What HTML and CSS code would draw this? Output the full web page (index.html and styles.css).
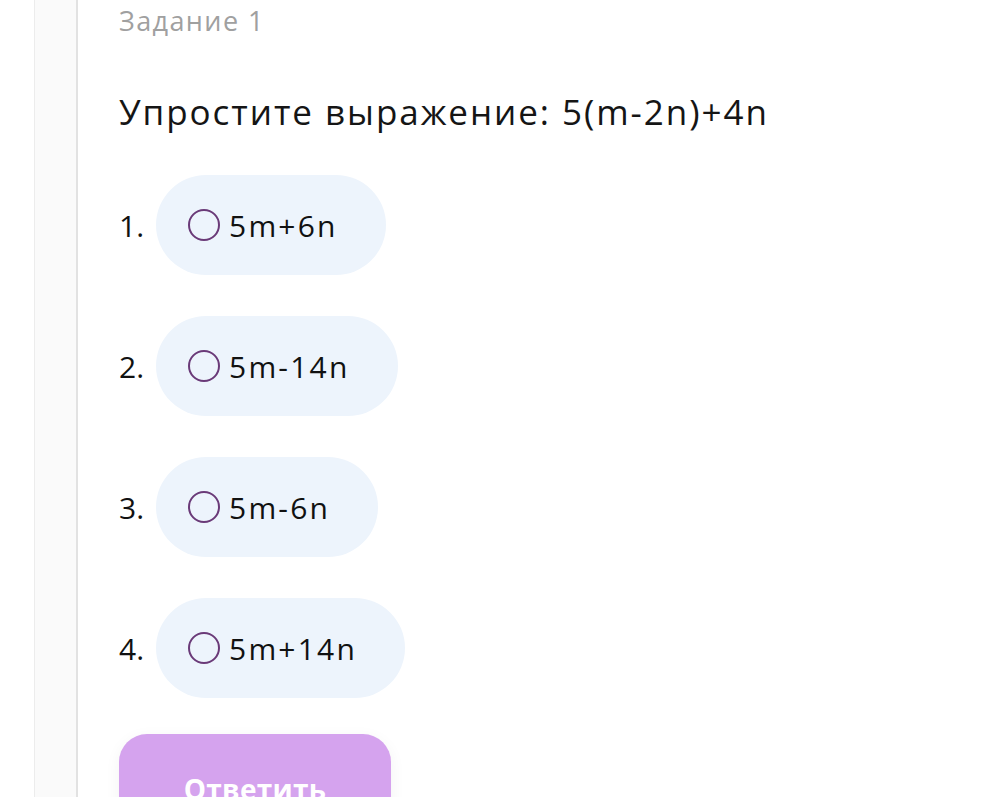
FILE: index.html
```html
<!DOCTYPE html>
<html lang="ru">
<head>
<meta charset="utf-8">
<link rel="stylesheet" href="styles.css">
</head>
<body>
<div class="page">
  <div class="gutter"></div>
  <div class="rail"></div>
  <main class="main">
    <div class="task-title">Задание 1</div>
    <div class="question">Упростите выражение: 5(m-2n)+4n</div>
    <ol class="options">
      <li class="option"><span class="num">1.</span><label class="pill"><span class="radio"></span><span class="opt-text">5m+6n</span></label></li>
      <li class="option"><span class="num">2.</span><label class="pill"><span class="radio"></span><span class="opt-text">5m-14n</span></label></li>
      <li class="option"><span class="num">3.</span><label class="pill"><span class="radio"></span><span class="opt-text">5m-6n</span></label></li>
      <li class="option"><span class="num">4.</span><label class="pill"><span class="radio"></span><span class="opt-text">5m+14n</span></label></li>
    </ol>
    <button class="answer">Ответить</button>
  </main>
</div>
</body>
</html>
```

FILE: styles.css
```css
html, body {
  margin: 0;
  padding: 0;
  background: #ffffff;
  height: 100%;
  overflow: hidden;
}
body {
  font-family: "Open Sans", "Noto Sans", sans-serif;
  color: #111111;
}
.page {
  display: flex;
  min-height: 797px;
}
.gutter {
  width: 34px;
  flex: none;
}
.rail {
  width: 41px;
  flex: none;
  background: #fafafa;
  border-left: 1px solid #ececec;
  border-right: 2px solid #e2e2e2;
}
.main {
  flex: 1;
  padding-left: 41px;
}
.task-title {
  font-size: 27px;
  color: #a0a0a0;
  line-height: 1;
  margin-top: 7px;
  letter-spacing: 1.4px;
}
.question {
  font-size: 35px;
  line-height: 1;
  margin-top: 60px;
  letter-spacing: 1.95px;
  color: #151515;
}
.options {
  list-style: none;
  margin: 46px 0 0 0;
  padding: 0;
  display: flex;
  flex-direction: column;
  gap: 41px;
}
.option {
  display: flex;
  align-items: center;
  gap: 12px;
}
.num {
  font-size: 30px;
}
.pill {
  display: flex;
  align-items: center;
  height: 100px;
  padding: 0 48px 0 32px;
  background: #edf4fc;
  border-radius: 50px;
  box-sizing: border-box;
}
.radio {
  width: 28px;
  height: 28px;
  border: 2px solid #6a3a78;
  border-radius: 50%;
  flex: none;
  margin-right: 9px;
}
.opt-text {
  font-size: 30px;
  letter-spacing: 2.2px;
}
.answer {
  display: block;
  margin-top: 36px;
  width: 272px;
  height: 110px;
  border: none;
  border-radius: 28px;
  background: #d5a3ee;
  color: #ffffff;
  font-family: "Open Sans", sans-serif;
  font-weight: 700;
  font-size: 28px;
  letter-spacing: 0.3px;
  padding: 0 0 0 0;
  line-height: 1;
  box-shadow: 0 4px 16px rgba(0,0,0,0.05);
}
```
